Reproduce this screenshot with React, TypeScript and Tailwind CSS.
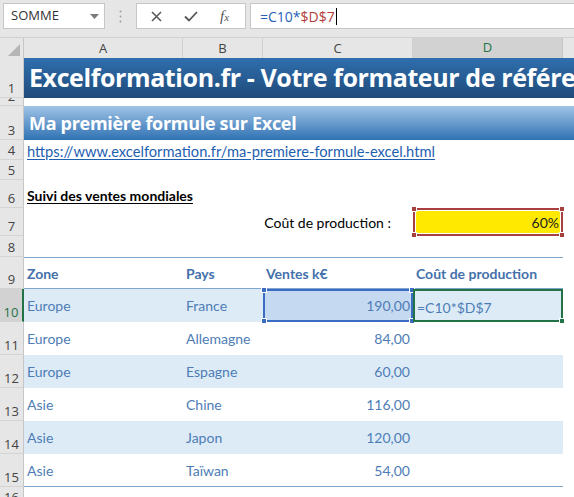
import React from 'react';

const COLS = 'grid grid-cols-[24px_159px_80px_150px_150px_1fr]';

function RowHead({ n, active = false }: { n: number; active?: boolean }) {
  return (
    <div
      className={
        'flex items-end justify-center overflow-hidden border-b border-[#d4d4d4] text-[13px] leading-[16px] font-["Open_Sans",sans-serif] ' +
        (active
          ? 'bg-[#d2d2d2] text-[#217346] border-r-2 border-r-[#217346]'
          : 'bg-[#e6e6e6] text-[#444] border-r border-r-[#c6c6c6]')
      }
    >
      <span className="pb-[1px]">{n}</span>
    </div>
  );
}

const rows = [
  { zone: 'Europe', pays: 'France', ventes: '190,00', fill: true },
  { zone: 'Europe', pays: 'Allemagne', ventes: '84,00', fill: false },
  { zone: 'Europe', pays: 'Espagne', ventes: '60,00', fill: true },
  { zone: 'Asie', pays: 'Chine', ventes: '116,00', fill: false },
  { zone: 'Asie', pays: 'Japon', ventes: '120,00', fill: true },
  { zone: 'Asie', pays: 'Taïwan', ventes: '54,00', fill: false },
];

function Handle({ className }: { className: string }) {
  return <span className={'absolute w-[6px] h-[6px] border border-white ' + className} />;
}

export default function App() {
  return (
    <div className="w-[574px] h-[497px] overflow-hidden bg-white font-['Lato',sans-serif]">
      {/* formula bar */}
      <div className="h-[38px] bg-[#e6e6e6] border-b border-[#d0d0d0] pt-[3px] flex items-start">
        <div className="ml-[3px] w-[102px] h-[26px] bg-white border border-[#c6c6c6] flex items-center justify-between pl-[7px] pr-[5px]">
          <span className="text-[13px] text-[#333] font-['Open_Sans',sans-serif]">SOMME</span>
          <svg width="9" height="5" viewBox="0 0 9 5"><path d="M0 0h9L4.5 5z" fill="#7a7a7a" /></svg>
        </div>
        <div className="w-[31px] h-[26px] flex items-center justify-center">
          <svg width="3" height="13" viewBox="0 0 3 13">
            <circle cx="1.5" cy="1.5" r="1" fill="#a0a0a0" />
            <circle cx="1.5" cy="6.5" r="1" fill="#a0a0a0" />
            <circle cx="1.5" cy="11.5" r="1" fill="#a0a0a0" />
          </svg>
        </div>
        <div className="w-[110px] h-[26px] bg-white border border-[#c6c6c6] flex items-center pl-[14px]">
          <svg width="11" height="11" viewBox="0 0 11 11" className="mr-[22px]">
            <path d="M1 1l9 9M10 1l-9 9" stroke="#555" strokeWidth="1.5" />
          </svg>
          <svg width="14" height="11" viewBox="0 0 14 11" className="mr-[22px]">
            <path d="M1 5.5l4 4L13 1" stroke="#555" strokeWidth="1.8" fill="none" />
          </svg>
          <span className="text-[15px] italic text-[#555] font-['Liberation_Serif',serif]">f<span className="text-[11px]">x</span></span>
        </div>
        <div className="ml-[4px] flex-1 h-[26px] bg-white border-y border-l border-[#c6c6c6] flex items-center pl-[9px] text-[14px] font-['Open_Sans',sans-serif]">
          <span className="text-[#2a5fb8]">=C10*</span>
          <span className="text-[#b23c3c]">$D$7</span>
          <span className="w-px h-[17px] bg-black ml-px" />
        </div>
      </div>

      {/* column headers */}
      <div className={COLS + ' h-[20px] text-[13px] text-[#444] font-["Open_Sans",sans-serif]'}>
        <div className="bg-[#e6e6e6] border-r border-b border-[#c6c6c6] flex items-end justify-end p-[3px]">
          <svg width="12" height="12" viewBox="0 0 12 12"><path d="M12 0v12H0z" fill="#b5b5b5" /></svg>
        </div>
        {['A', 'B', 'C'].map((c) => (
          <div key={c} className="bg-[#e6e6e6] border-r border-b border-[#d0d0d0] flex items-center justify-center">{c}</div>
        ))}
        <div className="bg-[#d2d2d2] border-r border-[#c6c6c6] border-b-2 border-b-[#217346] flex items-center justify-center text-[#217346]">D</div>
        <div className="bg-[#e6e6e6] border-b border-[#d0d0d0]" />
      </div>

      {/* row 1 */}
      <div className={COLS + ' h-[40px]'}>
        <RowHead n={1} />
        <div className="col-span-5 bg-gradient-to-b from-[#2f6fae] to-[#1f4b7a] flex items-center pl-[5px] overflow-hidden whitespace-nowrap">
          <span className="text-white font-bold text-[25px] tracking-[-0.4px] font-['Open_Sans',sans-serif]">Excelformation.fr - Votre formateur de référence</span>
        </div>
      </div>

      {/* row 2 */}
      <div className={COLS + ' h-[8px]'}>
        <RowHead n={2} />
        <div className="col-span-5" />
      </div>

      {/* row 3 */}
      <div className={COLS + ' h-[34px]'}>
        <RowHead n={3} />
        <div className="col-span-5 bg-gradient-to-b from-[#9fc4e6] to-[#2e72b3] flex items-center pl-[5px] whitespace-nowrap">
          <span className="text-white font-bold text-[18px] font-['Open_Sans',sans-serif] tracking-[-0.3px]">Ma première formule sur Excel</span>
        </div>
      </div>

      {/* row 4 */}
      <div className={COLS + ' h-[20px]'}>
        <RowHead n={4} />
        <div className="col-span-5 flex items-end pl-[3px] whitespace-nowrap">
          <span className="text-[14.7px] text-[#1f5fb0] underline underline-offset-2 leading-[18px]">https://www.excelformation.fr/ma-premiere-formule-excel.html</span>
        </div>
      </div>

      {/* row 5 */}
      <div className={COLS + ' h-[20px]'}>
        <RowHead n={5} />
        <div className="col-span-5" />
      </div>

      {/* row 6 */}
      <div className={COLS + ' h-[28px]'}>
        <RowHead n={6} />
        <div className="col-span-5 flex items-end pl-[3px] pb-[2px] whitespace-nowrap">
          <span className="text-[14px] font-bold text-black underline underline-offset-2">Suivi des ventes mondiales</span>
        </div>
      </div>

      {/* row 7 */}
      <div className={COLS + ' h-[28px]'}>
        <RowHead n={7} />
        <div />
        <div className="col-span-2 flex items-center justify-end pr-[22px] whitespace-nowrap text-[14px] text-black">Coût de production :</div>
        <div className="relative border-2 border-[#a8403f]">
          <div className="absolute inset-0 border border-white bg-[#ffe900] flex items-center justify-end pr-[1px] text-[14px] text-[#222]">60%</div>
          <Handle className="-left-[4px] -top-[4px] bg-[#a8403f]" />
          <Handle className="-right-[4px] -top-[4px] bg-[#a8403f]" />
          <Handle className="-left-[4px] -bottom-[4px] bg-[#a8403f]" />
          <Handle className="-right-[4px] -bottom-[4px] bg-[#a8403f]" />
        </div>
        <div />
      </div>

      {/* row 8 */}
      <div className={COLS + ' h-[21px]'}>
        <RowHead n={8} />
        <div className="col-span-5" />
      </div>

      {/* row 9 header */}
      <div className={COLS + ' h-[32px]'}>
        <RowHead n={9} />
        {['Zone', 'Pays', 'Ventes k€', 'Coût de production'].map((h) => (
          <div key={h} className="border-t border-b border-[#7fa5cc] flex items-center pl-[3px] text-[14px] font-bold text-[#4471ab] whitespace-nowrap">{h}</div>
        ))}
        <div />
      </div>

      {/* data rows */}
      {rows.map((r, i) => {
        const fill = r.fill ? 'bg-[#ddebf7]' : '';
        const last = i === rows.length - 1 ? ' border-b border-[#7fa5cc]' : '';
        return (
          <div key={i} className={COLS + ' h-[33px]'}>
            <RowHead n={10 + i} active={i === 0} />
            <div className={fill + last + ' flex items-center pl-[3px] text-[14px] text-[#4e7db6]'}>{r.zone}</div>
            <div className={fill + last + ' flex items-center pl-[3px] text-[14px] text-[#4e7db6]'}>{r.pays}</div>
            {i === 0 ? (
              <div className="relative bg-[#c5d9f1] border-2 border-[#3a6cc4] flex items-center justify-end pr-[1px] text-[14px] text-[#4e7db6]">
                {r.ventes}
                <Handle className="-left-[4px] -top-[4px] bg-[#3a6cc4]" />
                <Handle className="-right-[4px] -top-[4px] bg-[#3a6cc4]" />
                <Handle className="-left-[4px] -bottom-[4px] bg-[#3a6cc4]" />
                <Handle className="-right-[4px] -bottom-[4px] bg-[#3a6cc4]" />
              </div>
            ) : (
              <div className={fill + last + ' flex items-center justify-end pr-[3px] text-[14px] text-[#4e7db6]'}>{r.ventes}</div>
            )}
            {i === 0 ? (
              <div className="relative bg-[#ddebf7] border-2 border-[#217346] flex items-end pl-[2px] pb-[2px] text-[14px] text-[#4e7db6]">
                =C10*$D$7
                <span className="absolute -right-[4px] -bottom-[4px] w-[6px] h-[6px] bg-[#217346] border border-white" />
              </div>
            ) : (
              <div className={fill + last} />
            )}
            <div />
          </div>
        );
      })}

      {/* row 16 */}
      <div className={COLS + ' h-[20px]'}>
        <RowHead n={16} />
        <div className="col-span-5" />
      </div>
    </div>
  );
}
